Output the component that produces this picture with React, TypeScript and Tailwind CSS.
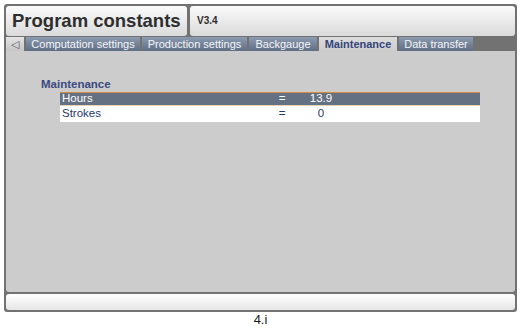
import React from "react";

const tabs = [
  { label: "Computation settings", w: "w-[114px]", active: false },
  { label: "Production settings", w: "w-[105px]", active: false },
  { label: "Backgauge", w: "w-[68px]", active: false },
  { label: "Maintenance", w: "w-[78px]", active: true },
  { label: "Data transfer", w: "w-[74px]", active: false },
];

const rows = [
  { label: "Hours", value: "13.9", selected: true },
  { label: "Strokes", value: "0", selected: false },
];

export default function App() {
  return (
    <div
      className="w-[521px] h-[329px] bg-white overflow-hidden"
      style={{ fontFamily: '"Liberation Sans", Arial, sans-serif' }}
    >
      <div className="ml-[4px] mt-[4px] w-[513px] h-[308px] bg-[#727272] rounded-[3px] p-[2px] flex flex-col">
        {/* header */}
        <div className="flex gap-[3px] h-[30px]">
          <div className="w-[181px] rounded-[3px] bg-gradient-to-b from-[#fbfbfb] to-[#dadada] flex items-center pl-[6px] text-[18.5px] font-bold text-[#2e2e2e] leading-none">
            Program constants
          </div>
          <div className="flex-1 rounded-[3px] bg-gradient-to-b from-[#fbfbfb] to-[#dadada] flex items-center pl-[7px] text-[10px] font-bold text-[#2e2e2e] leading-none">
            V3.4
          </div>
        </div>
        {/* tabs */}
        <div className="flex gap-[2px] h-[14px] mt-[1px]">
          <div className="w-[18px] bg-gradient-to-b from-[#e4e4e4] to-[#c6c6c6] flex items-center justify-center text-[11px] text-[#555] leading-none">
            ◁
          </div>
          {tabs.map((t) => (
            <div
              key={t.label}
              className={
                t.active
                  ? `${t.w} bg-gradient-to-b from-[#dcdcdc] to-[#cdcdcd] flex items-center justify-center text-[11px] font-bold text-[#34447a] leading-none whitespace-nowrap`
                  : `${t.w} bg-gradient-to-b from-[#8d9bb0] to-[#5f6e84] flex items-center justify-center text-[11px] text-[#f4f6fa] leading-none whitespace-nowrap`
              }
            >
              {t.label}
            </div>
          ))}
        </div>
        {/* content */}
        <div className="h-[241px] bg-[#cccccc] rounded-b-[3px] pt-[27px]">
          <div className="pl-[35px] text-[11.5px] font-bold text-[#3a4a7e] leading-[13px]">
            Maintenance
          </div>
          <div className="ml-[54px] w-[420px] mt-[1px] flex flex-col">
            {rows.map((r) =>
              r.selected ? (
                <div
                  key={r.label}
                  className="h-[14px] bg-[#647182] border-t border-[#d88a3a] border-b border-b-[#e6d6b6] flex items-center text-[11.5px] text-white leading-none"
                >
                  <div className="w-[218px] pl-[2px]">{r.label}</div>
                  <div className="w-[8px] text-center">=</div>
                  <div className="w-[70px] text-center">{r.value}</div>
                </div>
              ) : (
                <div
                  key={r.label}
                  className="h-[16px] bg-white flex items-center text-[11.5px] text-[#26386a] leading-none"
                >
                  <div className="w-[218px] pl-[2px]">{r.label}</div>
                  <div className="w-[8px] text-center">=</div>
                  <div className="w-[70px] text-center">{r.value}</div>
                </div>
              )
            )}
          </div>
        </div>
        {/* bottom bar */}
        <div className="mt-[2px] h-[16px] rounded-[3px] bg-gradient-to-b from-[#ffffff] to-[#e6e6e6]" />
      </div>
      <div className="text-center text-[13px] text-[#1a1a1a] leading-[14px] mt-[1px]">4.i</div>
    </div>
  );
}
